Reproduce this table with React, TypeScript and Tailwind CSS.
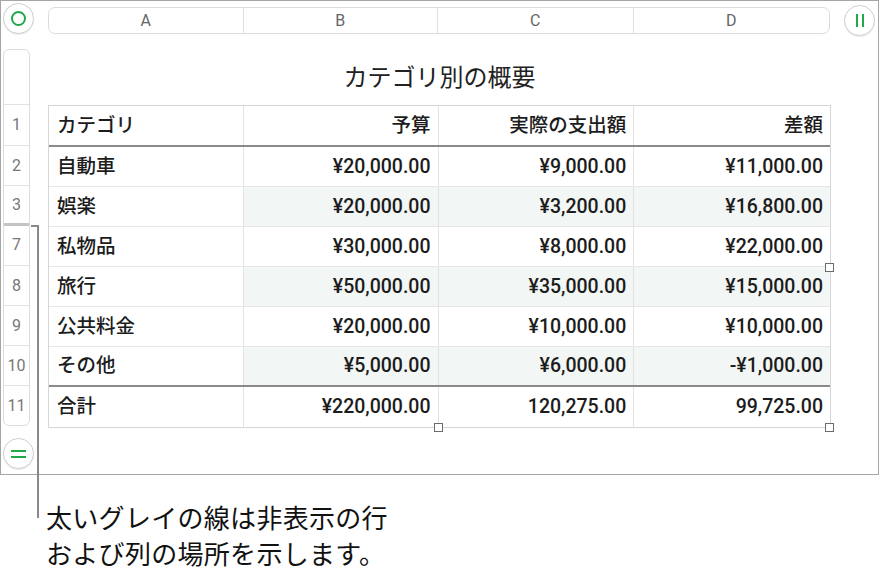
import React from "react";

type Row = {
  num: string;
  label: string;
  values: string[];
  shaded?: boolean;
};

const rows: Row[] = [
  { num: "2", label: "自動車", values: ["¥20,000.00", "¥9,000.00", "¥11,000.00"] },
  { num: "3", label: "娯楽", values: ["¥20,000.00", "¥3,200.00", "¥16,800.00"], shaded: true },
  { num: "7", label: "私物品", values: ["¥30,000.00", "¥8,000.00", "¥22,000.00"] },
  { num: "8", label: "旅行", values: ["¥50,000.00", "¥35,000.00", "¥15,000.00"], shaded: true },
  { num: "9", label: "公共料金", values: ["¥20,000.00", "¥10,000.00", "¥10,000.00"] },
  { num: "10", label: "その他", values: ["¥5,000.00", "¥6,000.00", "-¥1,000.00"], shaded: true },
];

const colWidths = ["w-[195px]", "w-[195px]", "w-[196px]", "w-[196px]"];

function CircleButton({ children, className = "" }: { children: React.ReactNode; className?: string }) {
  return (
    <div
      className={`flex h-[31px] w-[31px] shrink-0 items-center justify-center rounded-full border border-[#cfcfcf] bg-white shadow-[0_1px_1px_rgba(0,0,0,0.08)] ${className}`}
    >
      {children}
    </div>
  );
}

function Handle({ className }: { className: string }) {
  return <div className={`absolute h-[9px] w-[9px] border border-[#6b6b6b] bg-white ${className}`} />;
}

export default function App() {
  return (
    <div
      className="relative h-[575px] w-[880px] overflow-hidden bg-white text-[#1c1c1c]"
      style={{ fontFamily: "Roboto, 'Noto Sans CJK JP', sans-serif" }}
    >
      {/* sheet canvas */}
      <div className="flex h-[475px] w-[879px] flex-col border border-[#a5a5a5]">
        {/* column header row */}
        <div className="flex h-[48px] items-start">
          <CircleButton className="ml-[2px] mt-[2px]">
            <div className="h-[15px] w-[15px] rounded-full border-2 border-[#20a84a]" />
          </CircleButton>
          <div className="ml-[14px] mt-[6px] flex h-[27px] w-[782px] overflow-hidden rounded-[7px] border border-[#dcdcdc] bg-white text-[16px] text-[#666]">
            {["A", "B", "C", "D"].map((c, i) => (
              <div
                key={c}
                className={`flex items-center justify-center ${colWidths[i]} ${i < 3 ? "border-r border-[#e0e0e0]" : ""}`}
              >
                {c}
              </div>
            ))}
          </div>
          <CircleButton className="ml-[14px] mt-[4px]">
            <div className="flex gap-[4px]">
              <div className="h-[13px] w-[2px] bg-[#20a84a]" />
              <div className="h-[13px] w-[2px] bg-[#20a84a]" />
            </div>
          </CircleButton>
        </div>

        {/* body */}
        <div className="flex">
          {/* row headers */}
          <div className="ml-[2px] flex w-[32px] flex-col items-start">
            <div className="flex w-[27px] flex-col overflow-hidden rounded-[6px] border border-[#dcdcdc] text-[16px] text-[#777]">
              <div className="h-[55px] border-b border-[#e2e2e2]" />
              <div className="flex h-[41px] items-center justify-center border-b border-[#e2e2e2]">1</div>
              {rows.map((r) => (
                <div
                  key={r.num}
                  className={`flex h-[40px] items-center justify-center ${
                    r.num === "3" ? "border-b-[3px] border-[#c4c4c4]" : "border-b border-[#e2e2e2]"
                  } ${r.num === "7" ? "-mt-[2px] h-[42px]" : ""}`}
                >
                  {r.num}
                </div>
              ))}
              <div className="flex h-[39px] items-center justify-center">11</div>
            </div>
            <CircleButton className="mt-[12px]">
              <div className="flex flex-col gap-[4px]">
                <div className="h-[2px] w-[15px] bg-[#20a84a]" />
                <div className="h-[2px] w-[15px] bg-[#20a84a]" />
              </div>
            </CircleButton>
          </div>

          {/* table */}
          <div className="ml-[13px] w-[783px]">
            <div
              className="flex h-[56px] items-center justify-center pb-[3px] text-[24px] text-[#222]"
              style={{ fontFamily: "'Noto Sans CJK JP', sans-serif" }}
            >
              カテゴリ別の概要
            </div>
            <div className="border border-[#d6d6d6] text-[19.5px] font-medium">
              {/* header */}
              <div className="flex h-[41px] border-b-2 border-[#8a8a8a]">
                {["カテゴリ", "予算", "実際の支出額", "差額"].map((h, i) => (
                  <div
                    key={h}
                    className={`flex items-center ${colWidths[i]} ${
                      i === 0 ? "justify-start pl-[8px]" : "justify-end pr-[7px]"
                    } ${i < 3 ? "border-r border-[#e3e3e3]" : ""}`}
                  >
                    {h}
                  </div>
                ))}
              </div>
              {rows.map((r, ri) => (
                <div
                  key={r.num}
                  className={`flex h-[40px] ${
                    ri === rows.length - 1 ? "border-b-2 border-[#8a8a8a]" : "border-b border-[#e6e6e6]"
                  }`}
                >
                  <div className={`flex items-center justify-start border-r border-[#e3e3e3] pl-[8px] ${colWidths[0]}`}>
                    {r.label}
                  </div>
                  {r.values.map((v, i) => (
                    <div
                      key={i}
                      className={`flex items-center justify-end pr-[7px] ${colWidths[i + 1]} ${
                        r.shaded ? "bg-[#f2f6f5]" : ""
                      } ${i < 2 ? "border-r border-[#e3e3e3]" : ""}`}
                    >
                      {v}
                    </div>
                  ))}
                </div>
              ))}
              <div className="flex h-[40px]">
                <div className={`flex items-center border-r border-[#e3e3e3] pl-[8px] ${colWidths[0]}`}>合計</div>
                {["¥220,000.00", "120,275.00", "99,725.00"].map((v, i) => (
                  <div
                    key={v}
                    className={`flex items-center justify-end pr-[7px] ${colWidths[i + 1]} ${
                      i < 2 ? "border-r border-[#e3e3e3]" : ""
                    }`}
                  >
                    {v}
                  </div>
                ))}
              </div>
            </div>
          </div>
        </div>
      </div>

      {/* selection handles */}
      <Handle className="left-[825px] top-[263px]" />
      <Handle className="left-[434px] top-[423px]" />
      <Handle className="left-[825px] top-[423px]" />

      {/* callout line */}
      <div className="absolute left-[31px] top-[225px] h-[2px] w-[8px] bg-[#8a8a8a]" />
      <div className="absolute left-[37px] top-[225px] h-[293px] w-[2px] bg-[#8a8a8a]" />

      {/* callout text */}
      <div
        className="pl-[46px] pt-[24px] text-[26px] leading-[36px] tracking-[0.3px] text-[#111]"
        style={{ fontFamily: "'Noto Sans CJK JP', sans-serif" }}
      >
        太いグレイの線は非表示の行
        <br />
        および列の場所を示します。
      </div>
    </div>
  );
}
